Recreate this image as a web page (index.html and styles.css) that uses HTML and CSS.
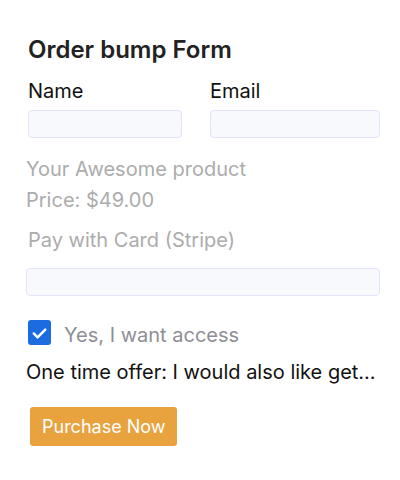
FILE: index.html
```html
<!DOCTYPE html>
<html lang="en">
<head>
<meta charset="utf-8">
<title>Order bump Form</title>
<link rel="stylesheet" href="styles.css">
</head>
<body>
<main class="form">
  <h1 class="title">Order bump Form</h1>
  <div class="fields">
    <div class="field field-name">
      <label class="label">Name</label>
      <div class="input"></div>
    </div>
    <div class="field field-email">
      <label class="label">Email</label>
      <div class="input"></div>
    </div>
  </div>
  <p class="muted product">Your Awesome product</p>
  <p class="muted price">Price: $49.00</p>
  <p class="muted pay">Pay with Card (Stripe)</p>
  <div class="input card"></div>
  <div class="check">
    <span class="box">
      <svg width="24" height="24" viewBox="0 0 24 24" aria-hidden="true">
        <path d="M6 12.5 L10 16.5 L18 8.5" fill="none" stroke="#fff" stroke-width="2.6" stroke-linecap="round" stroke-linejoin="round"/>
      </svg>
    </span>
    <span class="check-text">Yes, I want access</span>
  </div>
  <p class="offer">One time offer: I would also like get...</p>
  <button class="buy" type="button">Purchase Now</button>
</main>
</body>
</html>
```
FILE: styles.css
```css
* { box-sizing: border-box; }
html, body { margin: 0; padding: 0; background: #fff; }
body { font-family: Inter, "Noto Sans", sans-serif; }

.form {
  display: flex;
  flex-direction: column;
  align-items: flex-start;
  width: 380px;
  padding: 36px 0 0 26px;
}

.title {
  margin: 0 0 0 2px;
  font-size: 24px;
  line-height: 28px;
  font-weight: 600;
  color: #222;
}

.fields {
  display: grid;
  grid-template-columns: 154px 170px;
  column-gap: 28px;
  margin: 15px 0 0 2px;
}

.field { display: flex; flex-direction: column; }

.label {
  font-size: 20px;
  line-height: 24px;
  color: #111;
}

.input {
  height: 28px;
  margin-top: 7px;
  background: #f8f9fc;
  border: 1px solid #e2e4fb;
  border-radius: 4px;
}

.muted {
  margin: 0;
  font-size: 20px;
  line-height: 24px;
  color: #acacac;
}

.product { margin-top: 19px; }
.price { margin-top: 7px; }
.pay { margin-top: 16px; margin-left: 2px; }

.input.card {
  width: 354px;
  margin-top: 16px;
}

.check {
  display: flex;
  align-items: flex-start;
  gap: 13px;
  margin: 24px 0 0 2px;
}

.box {
  display: flex;
  width: 23px;
  height: 25px;
  align-items: center;
  justify-content: center;
  background: #1b6ce0;
  border-radius: 3px;
}

.check-text {
  padding-top: 3px;
  font-size: 20px;
  line-height: 24px;
  color: #8e8e94;
}

.offer {
  margin: 13px 0 0;
  font-size: 20px;
  line-height: 24px;
  color: #111;
}

.buy {
  height: 39px;
  margin: 23px 0 0 4px;
  padding: 0 12px;
  border: 0;
  border-radius: 3px;
  background: #e8a33f;
  color: #fff;
  font-family: inherit;
  font-size: 18px;
  line-height: 24px;
}
```
